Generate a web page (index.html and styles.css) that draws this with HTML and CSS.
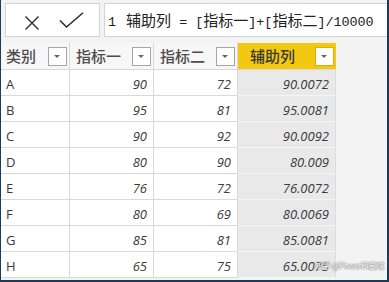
FILE: index.html
```html
<!DOCTYPE html>
<html lang="zh-CN">
<head>
<meta charset="utf-8">
<title>辅助列</title>
<link rel="stylesheet" href="styles.css">
</head>
<body>
<div class="window">
  <div class="formula-row">
    <div class="actions">
      <svg class="icon-x" width="16" height="16" viewBox="0 0 16 16"><path d="M1.5 1.5 L14.5 14.5 M14.5 1.5 L1.5 14.5" stroke="#2b2b2b" stroke-width="1.4" fill="none"/></svg>
      <svg class="icon-check" width="25" height="16" viewBox="0 0 25 16"><path d="M1 8.5 L7.5 15 L24 0.8" stroke="#2b2b2b" stroke-width="1.5" fill="none"/></svg>
    </div>
    <div class="formula"><span class="ln">1</span> <span class="cj">辅助列</span> = [<span class="cj">指标一</span>]+[<span class="cj">指标二</span>]/10000</div>
  </div>
  <div class="grid">
    <div class="hd"><span class="ht">类别</span><span class="dd"></span></div>
    <div class="hd"><span class="ht">指标一</span><span class="dd"></span></div>
    <div class="hd"><span class="ht">指标二</span><span class="dd"></span></div>
    <div class="hd sel"><span class="ht">辅助列</span><span class="dd"></span></div>

    <div class="c">A</div><div class="c n">90</div><div class="c n">72</div><div class="c n g">90.0072</div>
    <div class="c">B</div><div class="c n">95</div><div class="c n">81</div><div class="c n g">95.0081</div>
    <div class="c">C</div><div class="c n">90</div><div class="c n">92</div><div class="c n g">90.0092</div>
    <div class="c">D</div><div class="c n">80</div><div class="c n">90</div><div class="c n g">80.009</div>
    <div class="c">E</div><div class="c n">76</div><div class="c n">72</div><div class="c n g">76.0072</div>
    <div class="c">F</div><div class="c n">80</div><div class="c n">69</div><div class="c n g">80.0069</div>
    <div class="c">G</div><div class="c n">85</div><div class="c n">81</div><div class="c n g">85.0081</div>
    <div class="c">H</div><div class="c n">65</div><div class="c n">75</div><div class="c n g">65.0075</div>
  </div>
  <div class="watermark">知乎 @PowerBI星球</div>
</div>
</body>
</html>
```
FILE: styles.css
```css
html, body {
  margin: 0;
  padding: 0;
  background: #f3f3f3;
}
.window {
  position: relative;
  box-sizing: border-box;
  width: 389px;
  height: 282px;
  border-left: 1px solid #1d3a58;
  border-right: 2px solid #1d3a58;
  border-bottom: 2px solid #1d3a58;
  background: #f3f3f3;
  overflow: hidden;
  font-family: "Open Sans", "Noto Sans CJK SC", sans-serif;
}
.formula-row {
  display: flex;
  gap: 4px;
  padding: 3px 0 0 4px;
  height: 34px;
}
.actions {
  box-sizing: border-box;
  width: 95px;
  height: 34px;
  background: #fff;
  border: 1px solid #d4d4d4;
  display: flex;
  align-items: center;
  padding: 4px 0 0 18px;
  gap: 19px;
}
.icon-x { margin-top: 1px; }
.icon-check { margin-top: -4px; }
.formula {
  flex: 1;
  box-sizing: border-box;
  height: 34px;
  background: #fff;
  border: 1px solid #d4d4d4;
  border-right: none;
  font-family: "Liberation Mono", "DejaVu Sans Mono", monospace;
  font-size: 13.4px;
  color: #222;
  line-height: 32px;
  padding-left: 3px;
  white-space: nowrap;
  overflow: hidden;
}
.formula .ln { margin-right: 2px; }
.formula .cj {
  font-family: "Noto Sans CJK SC", sans-serif;
  font-size: 15px;
}
.grid {
  margin-top: 6px;
  display: grid;
  grid-template-columns: 69px 84px 84px 98px;
  grid-auto-rows: 26px;
  grid-template-rows: 27px;
}
.hd {
  box-sizing: border-box;
  border-right: 1px solid #d9d9d9;
  border-bottom: 1px solid #d9d9d9;
  background: #f7f7f7;
  display: flex;
  align-items: center;
  justify-content: space-between;
  padding: 0 2px 0 5px;
}
.hd:nth-child(2), .hd:nth-child(3) { padding-left: 6px; }
.ht {
  font-family: "Noto Sans CJK SC", sans-serif;
  font-size: 15px;
  color: #4d4d4d;
  font-weight: 500;
  margin-top: -1px;
}
.dd {
  box-sizing: border-box;
  width: 19px;
  height: 19px;
  border: 1px solid #a6a6a6;
  background: #fff;
  position: relative;
  margin-top: 1px;
}
.dd::after {
  content: "";
  position: absolute;
  left: 5px;
  top: 7px;
  border-left: 3.5px solid transparent;
  border-right: 3.5px solid transparent;
  border-top: 3.5px solid #666;
}
.hd.sel {
  background: #f2c811;
  border-right: none;
  padding-left: 12px;
}
.hd.sel .ht { color: #3a3a3a; }
.hd.sel .dd { border-color: #d9b100; }
.c {
  box-sizing: border-box;
  border-right: 1px solid #d9d9d9;
  border-bottom: 1px solid #d9d9d9;
  background: #fff;
  font-size: 13px;
  color: #3a3a3a;
  display: flex;
  align-items: center;
  padding: 2px 6px 0 5px;
}
.c.n {
  justify-content: flex-end;
  font-style: italic;
}
.c.g {
  background: #e9e9e9;
  border-bottom-color: #f4f4f4;
  border-right: 1px solid #dcdcdc;
}
.watermark {
  position: absolute;
  right: 3px;
  bottom: 9px;
  font-family: "Noto Sans CJK SC", sans-serif;
  font-size: 8.5px;
  letter-spacing: -0.6px;
  white-space: nowrap;
  color: #fff;
  text-shadow: 0 0 1px #555, 0 0 2px #888;
}
```
